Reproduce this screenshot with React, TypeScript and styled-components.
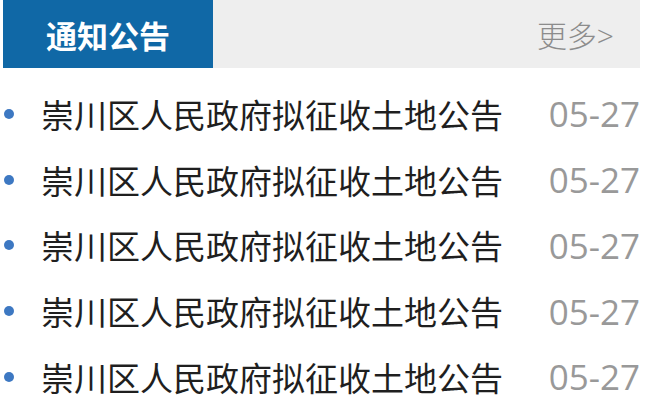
import React from 'react';
import styled, { createGlobalStyle } from 'styled-components';

const GlobalStyle = createGlobalStyle`
  html, body {
    margin: 0;
    padding: 0;
    background: #ffffff;
  }
  body {
    font-family: "Noto Sans CJK SC", "Noto Sans", sans-serif;
  }
`;

const Panel = styled.div`
  width: 637px;
  margin-left: 3px;
`;

const Header = styled.div`
  display: flex;
  align-items: center;
  justify-content: space-between;
  height: 68px;
  background: #eeeeee;
`;

const Tab = styled.div`
  width: 210px;
  height: 100%;
  background: #1068a6;
  color: #ffffff;
  font-size: 31px;
  font-weight: 700;
  display: flex;
  align-items: center;
  justify-content: center;
`;

const More = styled.a`
  color: #8c8c8c;
  font-family: "Open Sans", "Noto Sans CJK SC", sans-serif;
  font-size: 30px;
  font-weight: 300;
  padding-right: 26px;
  text-decoration: none;
`;

const List = styled.ul`
  list-style: none;
  margin: 0;
  padding: 13px 0 0;
`;

const Row = styled.li`
  display: flex;
  align-items: center;
  height: 65.75px;
`;

const Dot = styled.span`
  width: 10px;
  height: 10px;
  border-radius: 50%;
  background: #3d78c2;
  margin-left: 1px;
  flex-shrink: 0;
`;

const Title = styled.span`
  flex: 1;
  margin-left: 27px;
  font-size: 33px;
  color: #1f1f1f;
  white-space: nowrap;
`;

const Date = styled.span`
  font-family: "Open Sans", "Noto Sans", sans-serif;
  font-size: 35px;
  color: #999999;
`;

const items = Array.from({ length: 5 }, () => ({
  title: '崇川区人民政府拟征收土地公告',
  date: '05-27',
}));

export default function App() {
  return (
    <>
      <GlobalStyle />
      <Panel>
        <Header>
          <Tab>通知公告</Tab>
          <More href="#">更多&gt;</More>
        </Header>
        <List>
          {items.map((item, i) => (
            <Row key={i}>
              <Dot />
              <Title>{item.title}</Title>
              <Date>{item.date}</Date>
            </Row>
          ))}
        </List>
      </Panel>
    </>
  );
}
